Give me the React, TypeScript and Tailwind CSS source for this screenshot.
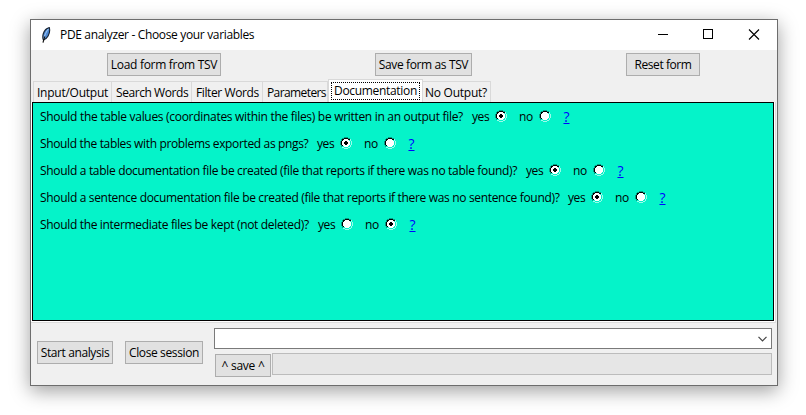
type Choice = "yes" | "no";

const RADIO_ROWS = [
  "....OOOO....",
  "..OOKKKKOO..",
  ".OKKWWWWKKL.",
  ".OKWWWWWWBL.",
  "OKWWWWWWWWBL",
  "OKWWWWWWWWBL",
  "OKWWWWWWWWBL",
  "OKWWWWWWWWBL",
  ".OKWWWWWWBL.",
  ".OBBWWWWBBL.",
  "..LLBBBBLL..",
  "....LLLL....",
];

const RADIO_COLORS: Record<string, string> = { O: "#04a086", K: "#000000", W: "#ffffff", B: "#05f3c9", L: "#9cfbea" };

function Radio({ on }: { on: boolean }) {
  return (
    <svg width="12" height="12" viewBox="0 0 12 12" shapeRendering="crispEdges" className="-mt-px shrink-0">
      {RADIO_ROWS.flatMap((row, y) =>
        row.split("").map((c, x) =>
          c === "." ? null : <rect key={`${x}-${y}`} x={x} y={y} width="1" height="1" fill={RADIO_COLORS[c]} />,
        ),
      )}
      {on && <path d="M5 4h2v1h1v2h-1v1h-2v-1h-1v-2h1z" fill="#000" />}
    </svg>
  );
}

const QUESTIONS: { text: string; value: Choice; width: string }[] = [
  {
    text: "Should the table values (coordinates within the files) be written in an output file?",
    value: "yes",
    width: "w-[432px] tracking-[-0.3px]",
  },
  { text: "Should the tables with problems exported as pngs?", value: "yes", width: "w-[277px] tracking-[-0.35px]" },
  {
    text: "Should a table documentation file be created (file that reports if there was no table found)?",
    value: "yes",
    width: "w-[486px] tracking-[-0.32px]",
  },
  {
    text: "Should a sentence documentation file be created (file that reports if there was no sentence found)?",
    value: "yes",
    width: "w-[528px] tracking-[-0.33px]",
  },
  { text: "Should the intermediate files be kept (not deleted)?", value: "no", width: "w-[278px] tracking-[-0.33px]" },
];

function Question({ text, value, width }: { text: string; value: Choice; width: string }) {
  return (
    <div className="flex h-[27px] items-center">
      <span className={`shrink-0 ${width}`}>{text}</span>
      <span className="w-[23px] shrink-0 tracking-[-0.4px]">yes</span>
      <Radio on={value === "yes"} />
      <span className="ml-3 w-5 shrink-0 tracking-[-0.3px]">no</span>
      <Radio on={value === "no"} />
      <a className="ml-3 w-[7px] shrink-0 text-center text-[14px] leading-4 text-[#0000ff] underline underline-offset-1">?</a>
    </div>
  );
}

function Button({ label, className }: { label: string; className: string }) {
  return (
    <button
      className={`flex h-[23px] shrink-0 items-center justify-center border border-[#adadad] bg-[#e1e1e1] pt-px ${className}`}
    >
      {label}
    </button>
  );
}

const TABS = [
  { label: "Input/Output", className: "w-[79px] pl-[3px] tracking-[-0.25px]" },
  { label: "Search Words", className: "w-[80px] pl-[4px] tracking-[-0.43px]" },
  { label: "Filter Words", className: "w-[71px] pl-[4px] tracking-[-0.4px]" },
  { label: "Parameters", className: "w-[65px] pl-[4px] tracking-[-0.6px]" },
  { label: "Documentation", className: "w-[95px] tracking-[-0.32px]", selected: true },
  { label: "No Output?", className: "w-[68px] pl-[2px] tracking-[-0.25px]" },
];

function Feather() {
  return (
    <svg width="10" height="16" viewBox="0 0 10 16">
      <path d="M8.3.6C5.8 1.3 3.1 4 2.2 7c-.5 1.900-.6 3.500-.1 5.300l1.100.300c1.300-.500 3-1.900 3.900-3.500C8.500 6.500 9 3 8.300.6z" fill="#4b86d0" stroke="#16202e" strokeWidth="1.100" />
      <path d="M7.400 1.800C5.400 4.500 3.700 8 2.600 11.800" fill="none" stroke="#b9dcff" strokeWidth=".8" />
      <path d="M3.600 9.500L2 15.600" stroke="#111" strokeWidth="1.200" />
    </svg>
  );
}

export default function App() {
  return (
    <div className="h-[415px] w-[806px] overflow-hidden bg-white pl-[30px] pt-[19px] font-['Open_Sans','Noto_Sans',sans-serif] text-[12px] leading-4 text-black">
      <div className="flex h-[367px] w-[748px] flex-col whitespace-nowrap border border-[#6d6d6d] bg-[#f0f0f0] shadow-[0_5px_18px_rgba(0,0,0,0.38)]">
        <div className="flex h-[30px] shrink-0 items-center bg-white pl-[10px]">
          <Feather />
          <span className="ml-[9px] tracking-[-0.34px]">PDE analyzer - Choose your variables</span>
          <svg width="108" height="12" viewBox="0 0 108 12" className="ml-auto mr-[15px]" fill="none" stroke="#000">
            <path d="M4 5.500h10M49.500 .5h9v9h-9z" shapeRendering="crispEdges" />
            <path d="M95 .5l10 10M105 .5l-10 10" strokeWidth="1.100" />
          </svg>
        </div>

        <div className="flex h-[29px] shrink-0 items-start pl-[76px] pt-[3px]">
          <Button label="Load form from TSV" className="w-[114px] tracking-[-0.3px]" />
          <Button label="Save form as TSV" className="ml-[154px] w-[97px] tracking-[-0.38px]" />
          <Button label="Reset form" className="ml-[154px] w-[74px] tracking-[-0.43px]" />
        </div>

        <div className="flex h-[23px] shrink-0 items-end pl-[2px]">
          {TABS.map((tab) =>
            tab.selected ? (
              <div key={tab.label} className={`h-[23px] border border-b-0 border-[#d9d9d9] bg-white p-[2px] ${tab.className}`}>
                <div className="flex h-[18px] items-center justify-center border border-dotted border-black">{tab.label}</div>
              </div>
            ) : (
              <div
                key={tab.label}
                className={`flex h-[21px] items-center border border-b-0 border-[#d9d9d9] pt-px [&:not(:first-child)]:border-l-0 ${tab.className}`}
              >
                {tab.label}
              </div>
            ),
          )}
        </div>

        <div className="h-[221px] w-[745px] shrink-0 border-b border-r border-[#dcdcdc] bg-white pb-px pr-px">
          <div className="ml-px h-[219px] border border-black bg-[#05f3c9] pl-[7px]">
            {QUESTIONS.map((q) => (
              <Question key={q.text} {...q} />
            ))}
          </div>
        </div>

        <div className="flex h-[61px] shrink-0">
          <div className="flex pl-[6px] pt-[18px]">
            <Button label="Start analysis" className="w-[76px] tracking-[-0.4px]" />
            <Button label="Close session" className="ml-3 w-[78px] tracking-[-0.38px]" />
          </div>
          <div className="ml-[11px] w-[558px] pt-[5px]">
            <div className="flex h-[21px] items-center justify-end border border-[#7a7a7a] bg-white pr-1">
              <svg width="9" height="6" viewBox="0 0 9 6" fill="none" stroke="#444" strokeWidth="1.200">
                <path d="M.5 .8l4 4 4-4" />
              </svg>
            </div>
            <div className="mt-1 flex pl-px">
              <Button label="^ save ^" className="mt-px w-[56px] tracking-[-0.25px]" />
              <div className="ml-px h-[22px] flex-1 border border-[#bcbcbc] bg-[#e6e6e6]" />
            </div>
          </div>
        </div>
      </div>
    </div>
  );
}
